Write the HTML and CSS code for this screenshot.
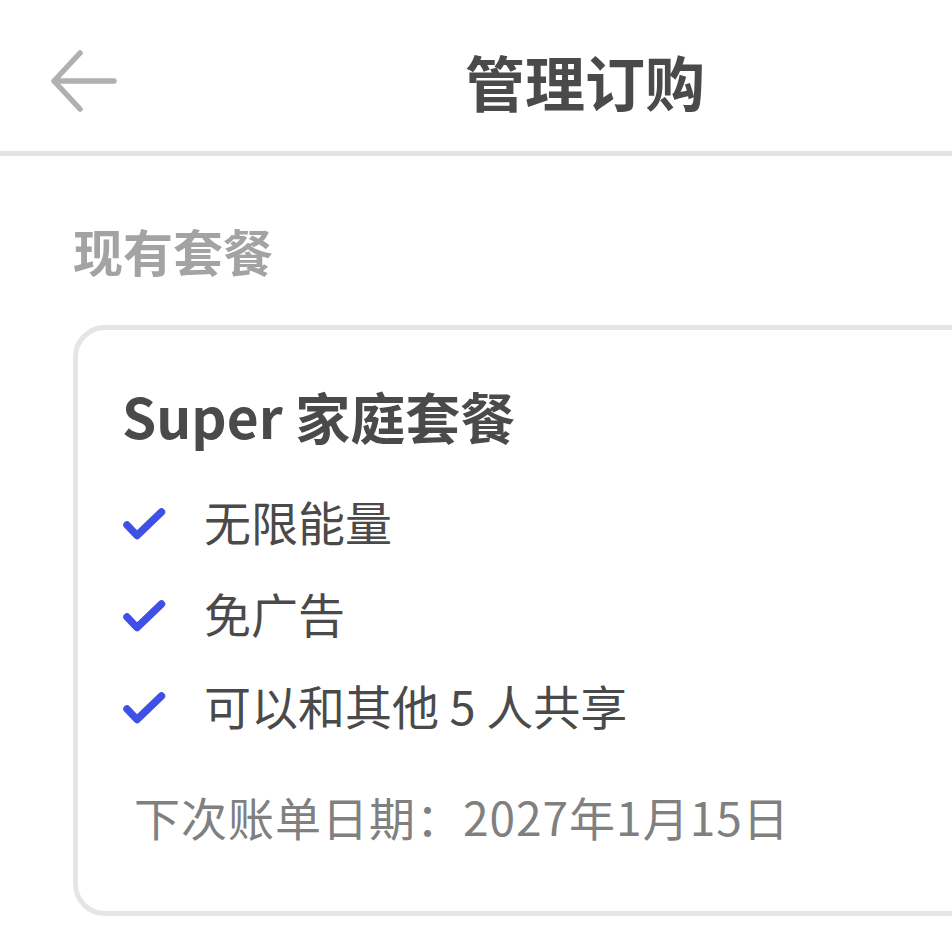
FILE: index.html
```html
<!DOCTYPE html>
<html lang="zh-CN">
<head>
<meta charset="utf-8">
<title>管理订购</title>
<link rel="stylesheet" href="styles.css">
</head>
<body>
<div class="page">
  <header class="topbar">
    <button class="back" aria-label="返回">
      <svg width="72" height="64" viewBox="0 0 72 64">
        <path d="M32 4 L6 32 L32 60 M6 32 L66 32" fill="none" stroke="#b0b0b0" stroke-width="5.5" stroke-linecap="round" stroke-linejoin="round"/>
      </svg>
    </button>
    <h1 class="title">管理订购</h1>
  </header>
  <main class="content">
    <h2 class="section-label">现有套餐</h2>
    <section class="card">
      <h3 class="plan-name">Super 家庭套餐</h3>
      <ul class="features">
        <li class="feature">
          <svg class="check" width="46" height="44" viewBox="0 0 46 44"><path d="M5 26 L15 36.5 L39.5 13" fill="none" stroke="#3f50e6" stroke-width="7.5" stroke-linecap="round" stroke-linejoin="round"/></svg>
          <span>无限能量</span>
        </li>
        <li class="feature">
          <svg class="check" width="46" height="44" viewBox="0 0 46 44"><path d="M5 26 L15 36.5 L39.5 13" fill="none" stroke="#3f50e6" stroke-width="7.5" stroke-linecap="round" stroke-linejoin="round"/></svg>
          <span>免广告</span>
        </li>
        <li class="feature">
          <svg class="check" width="46" height="44" viewBox="0 0 46 44"><path d="M5 26 L15 36.5 L39.5 13" fill="none" stroke="#3f50e6" stroke-width="7.5" stroke-linecap="round" stroke-linejoin="round"/></svg>
          <span>可以和其他 5 人共享</span>
        </li>
      </ul>
      <p class="billing">下次账单日期：2027年1月15日</p>
    </section>
  </main>
</div>
</body>
</html>
```

FILE: styles.css
```css
html, body {
  margin: 0;
  padding: 0;
  background: #ffffff;
  overflow: hidden;
}

body {
  font-family: "Noto Sans CJK SC", "Noto Sans", sans-serif;
  color: #4a4a4a;
}

.page {
  width: 1170px;
}

.topbar {
  height: 151px;
  border-bottom: 5px solid #e3e3e3;
  display: flex;
  align-items: center;
  padding: 10px 0 0 48px;
  box-sizing: border-box;
  height: 156px;
}

.back {
  background: none;
  border: 0;
  padding: 0;
  width: 72px;
  height: 64px;
  display: flex;
  align-items: center;
}

.title {
  flex: 1;
  margin: 0;
  text-align: center;
  font-size: 60px;
  font-weight: 700;
  color: #4a4a4a;
  padding-right: 120px;
  line-height: 70px;
}

.content {
  padding: 66px 0 0 73px;
}

.section-label {
  margin: 0;
  font-size: 50px;
  font-weight: 700;
  color: #a3a3a3;
  line-height: 56px;
}

.card {
  margin-top: 47px;
  border: 5px solid #e5e5e5;
  border-radius: 32px;
  padding: 52px 0 62px 44px;
}

.plan-name {
  margin: 0;
  font-size: 55px;
  font-weight: 700;
  line-height: 66px;
  color: #4a4a4a;
}

.features {
  list-style: none;
  margin: 40px 0 0;
  padding: 0;
  display: flex;
  flex-direction: column;
  gap: 26px;
}

.feature {
  display: flex;
  align-items: center;
  gap: 36px;
  font-size: 47px;
  line-height: 66px;
  color: #4a4a4a;
}

.check {
  flex: none;
}

.billing {
  margin: 45px 0 0 12px;
  font-size: 46px;
  line-height: 66px;
  color: #808080;
  letter-spacing: 1px;
}
```
